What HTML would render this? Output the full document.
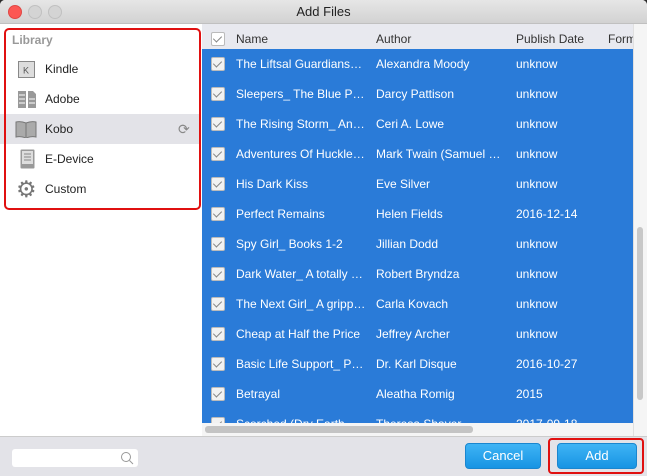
<!DOCTYPE html><html><head><style>
body{margin:0;width:647px;height:476px;overflow:hidden;background:#2b2b2b;font-family:"Liberation Sans",sans-serif;font-size:12px}
.win{position:absolute;left:0;top:0;width:647px;height:476px;background:#fff;border-radius:5px 5px 0 0;overflow:hidden}
.title{position:absolute;left:0;top:0;width:647px;height:23px;background:linear-gradient(#e6e6e6,#d2d2d2);border-bottom:1px solid #c0c0c0;text-align:center;line-height:24px;font-size:13px;color:#222}
.dot{position:absolute;top:5px;width:12px;height:12px;border-radius:50%;background:#d4d4d4;border:0.5px solid #c0c0c0}
.side{position:absolute;left:0;top:24px;width:200px;height:412px;background:#fff}
.lib{position:absolute;left:4px;top:28px;width:193px;height:178px;border:2px solid #e01010;border-radius:5px}
.item{position:absolute;left:2px;width:195px;height:30px;line-height:30px;font-size:12px;color:#222}
.item span{position:absolute;left:43px}
.hdr{position:absolute;left:202px;top:24px;width:431px;height:25px;background:#e8e9ef;color:#333;line-height:30px}
.tbl{position:absolute;left:202px;top:49px;width:431px;height:374px;background:#2a7bd8;overflow:hidden}
.row{position:absolute;left:0;width:431px;height:30px;color:#fff;line-height:30px;white-space:nowrap}
.cb{position:absolute;left:9px;top:8px;width:12px;height:12px;background:#f2f2f2;border-radius:2px;border:1px solid #bbb}
.cb:after{content:"";position:absolute;left:3px;top:1px;width:4px;height:7px;border:solid #888;border-width:0 1.5px 1.5px 0;transform:rotate(45deg)}
.c1{position:absolute;left:34px}.c2{position:absolute;left:174px}.c3{position:absolute;left:314px}
.bot{position:absolute;left:0;top:436px;width:647px;height:40px;background:#e3e3e8;border-top:1px solid #ccc}
.btn{position:absolute;top:443px;height:24px;border-radius:4px;background:linear-gradient(#3fb4f5,#1794e3);color:#fff;text-align:center;line-height:24px;font-size:13px;border:1px solid #1a86cf}
</style></head><body><div class="win">
<div class="title">Add Files</div>
<div class="dot" style="left:8px;background:#fc5753;border-color:#df4744"></div>
<div class="dot" style="left:28px"></div><div class="dot" style="left:48px"></div>
<div class="side">
<div style="position:absolute;left:12px;top:9px;color:#999;font-weight:bold">Library</div>
<div class="item" style="top:30px"><svg style="position:absolute;left:16px;top:7px" width="17" height="17"><rect x="0.5" y="0.5" width="16" height="16" fill="#ddd" stroke="#888"/><text x="5" y="12.5" font-size="9" fill="#555" font-family="Liberation Sans">K</text></svg><span>Kindle</span></div>
<div class="item" style="top:60px"><svg style="position:absolute;left:15px;top:6px" width="20" height="19"><path d="M1 1h8v17H1zM11 1h5l3 3v14h-8z" fill="#999"/><path d="M2 5h6M2 9h6M2 13h6M12 9h6M12 13h6" stroke="#fff"/></svg><span>Adobe</span></div>
<div class="item" style="top:90px;background:#e3e3e8;left:0;width:199px"><svg style="position:absolute;left:15px;top:7px" width="22" height="17"><path d="M1 1q5-1 10 1q5-2 10-1v15q-5-1-10 1q-5-2-10-1z" fill="#aaa" stroke="#777"/><path d="M11 2v14" stroke="#777"/></svg><span style="left:45px">Kobo</span><span style="left:178px;color:#888;font-size:14px">⟳</span></div>
<div class="item" style="top:120px"><svg style="position:absolute;left:18px;top:5px" width="15" height="20"><rect x="0.5" y="0.5" width="14" height="19" fill="#999" rx="1"/><rect x="2" y="2" width="11" height="13" fill="#ddd"/><path d="M4 5h7M4 8h7M4 11h7" stroke="#888"/></svg><span>E-Device</span></div>
<div class="item" style="top:150px"><span style="left:14px;font-size:23px;color:#777">⚙</span><span>Custom</span></div>
</div>
<div class="lib"></div>
<div class="hdr"><div class="cb" style="top:8px;background:#fff"></div><span class="c1">Name</span><span class="c2">Author</span><span class="c3">Publish Date</span><span style="position:absolute;left:406px">Form</span></div>
<div class="tbl">
<div class="row" style="top:0"><div class="cb"></div><span class="c1">The Liftsal Guardians…</span><span class="c2">Alexandra Moody</span><span class="c3">unknow</span></div>
<div class="row" style="top:30px"><div class="cb"></div><span class="c1">Sleepers_ The Blue P…</span><span class="c2">Darcy Pattison</span><span class="c3">unknow</span></div>
<div class="row" style="top:60px"><div class="cb"></div><span class="c1">The Rising Storm_ An…</span><span class="c2">Ceri A. Lowe</span><span class="c3">unknow</span></div>
<div class="row" style="top:90px"><div class="cb"></div><span class="c1">Adventures Of Huckle…</span><span class="c2">Mark Twain (Samuel …</span><span class="c3">unknow</span></div>
<div class="row" style="top:120px"><div class="cb"></div><span class="c1">His Dark Kiss</span><span class="c2">Eve Silver</span><span class="c3">unknow</span></div>
<div class="row" style="top:150px"><div class="cb"></div><span class="c1">Perfect Remains</span><span class="c2">Helen Fields</span><span class="c3">2016-12-14</span></div>
<div class="row" style="top:180px"><div class="cb"></div><span class="c1">Spy Girl_ Books 1-2</span><span class="c2">Jillian Dodd</span><span class="c3">unknow</span></div>
<div class="row" style="top:210px"><div class="cb"></div><span class="c1">Dark Water_ A totally …</span><span class="c2">Robert Bryndza</span><span class="c3">unknow</span></div>
<div class="row" style="top:240px"><div class="cb"></div><span class="c1">The Next Girl_ A gripp…</span><span class="c2">Carla Kovach</span><span class="c3">unknow</span></div>
<div class="row" style="top:270px"><div class="cb"></div><span class="c1">Cheap at Half the Price</span><span class="c2">Jeffrey Archer</span><span class="c3">unknow</span></div>
<div class="row" style="top:300px"><div class="cb"></div><span class="c1">Basic Life Support_ P…</span><span class="c2">Dr. Karl Disque</span><span class="c3">2016-10-27</span></div>
<div class="row" style="top:330px"><div class="cb"></div><span class="c1">Betrayal</span><span class="c2">Aleatha Romig</span><span class="c3">2015</span></div>
<div class="row" style="top:360px"><div class="cb"></div><span class="c1">Scorched (Dry Earth…</span><span class="c2">Theresa Shaver</span><span class="c3">2017-09-18</span></div>
</div>
<div style="position:absolute;left:633px;top:24px;width:14px;height:412px;background:#f5f5f5;border-left:1px solid #e0e0e0"></div>
<div style="position:absolute;left:637px;top:227px;width:6px;height:173px;background:#c8c8c8;border-radius:3px"></div>
<div style="position:absolute;left:202px;top:423px;width:431px;height:13px;background:#f5f5f5"></div>
<div style="position:absolute;left:205px;top:426px;width:268px;height:7px;background:#c4c4c4;border-radius:3px"></div>
<div class="bot"></div>
<div style="position:absolute;left:12px;top:449px;width:126px;height:18px;background:#fff;border-radius:3px"><svg style="position:absolute;right:4px;top:2px" width="14" height="14"><circle cx="6" cy="6" r="4.5" fill="none" stroke="#999"/><path d="M9.5 9.5l3.5 3.5" stroke="#999"/></svg></div>
<div class="btn" style="left:465px;width:74px">Cancel</div>
<div style="position:absolute;left:548px;top:438px;width:96px;height:36px;border:2px solid #e01010;border-radius:4px;box-sizing:border-box"></div>
<div class="btn" style="left:557px;width:78px">Add</div>
</div></body></html>
